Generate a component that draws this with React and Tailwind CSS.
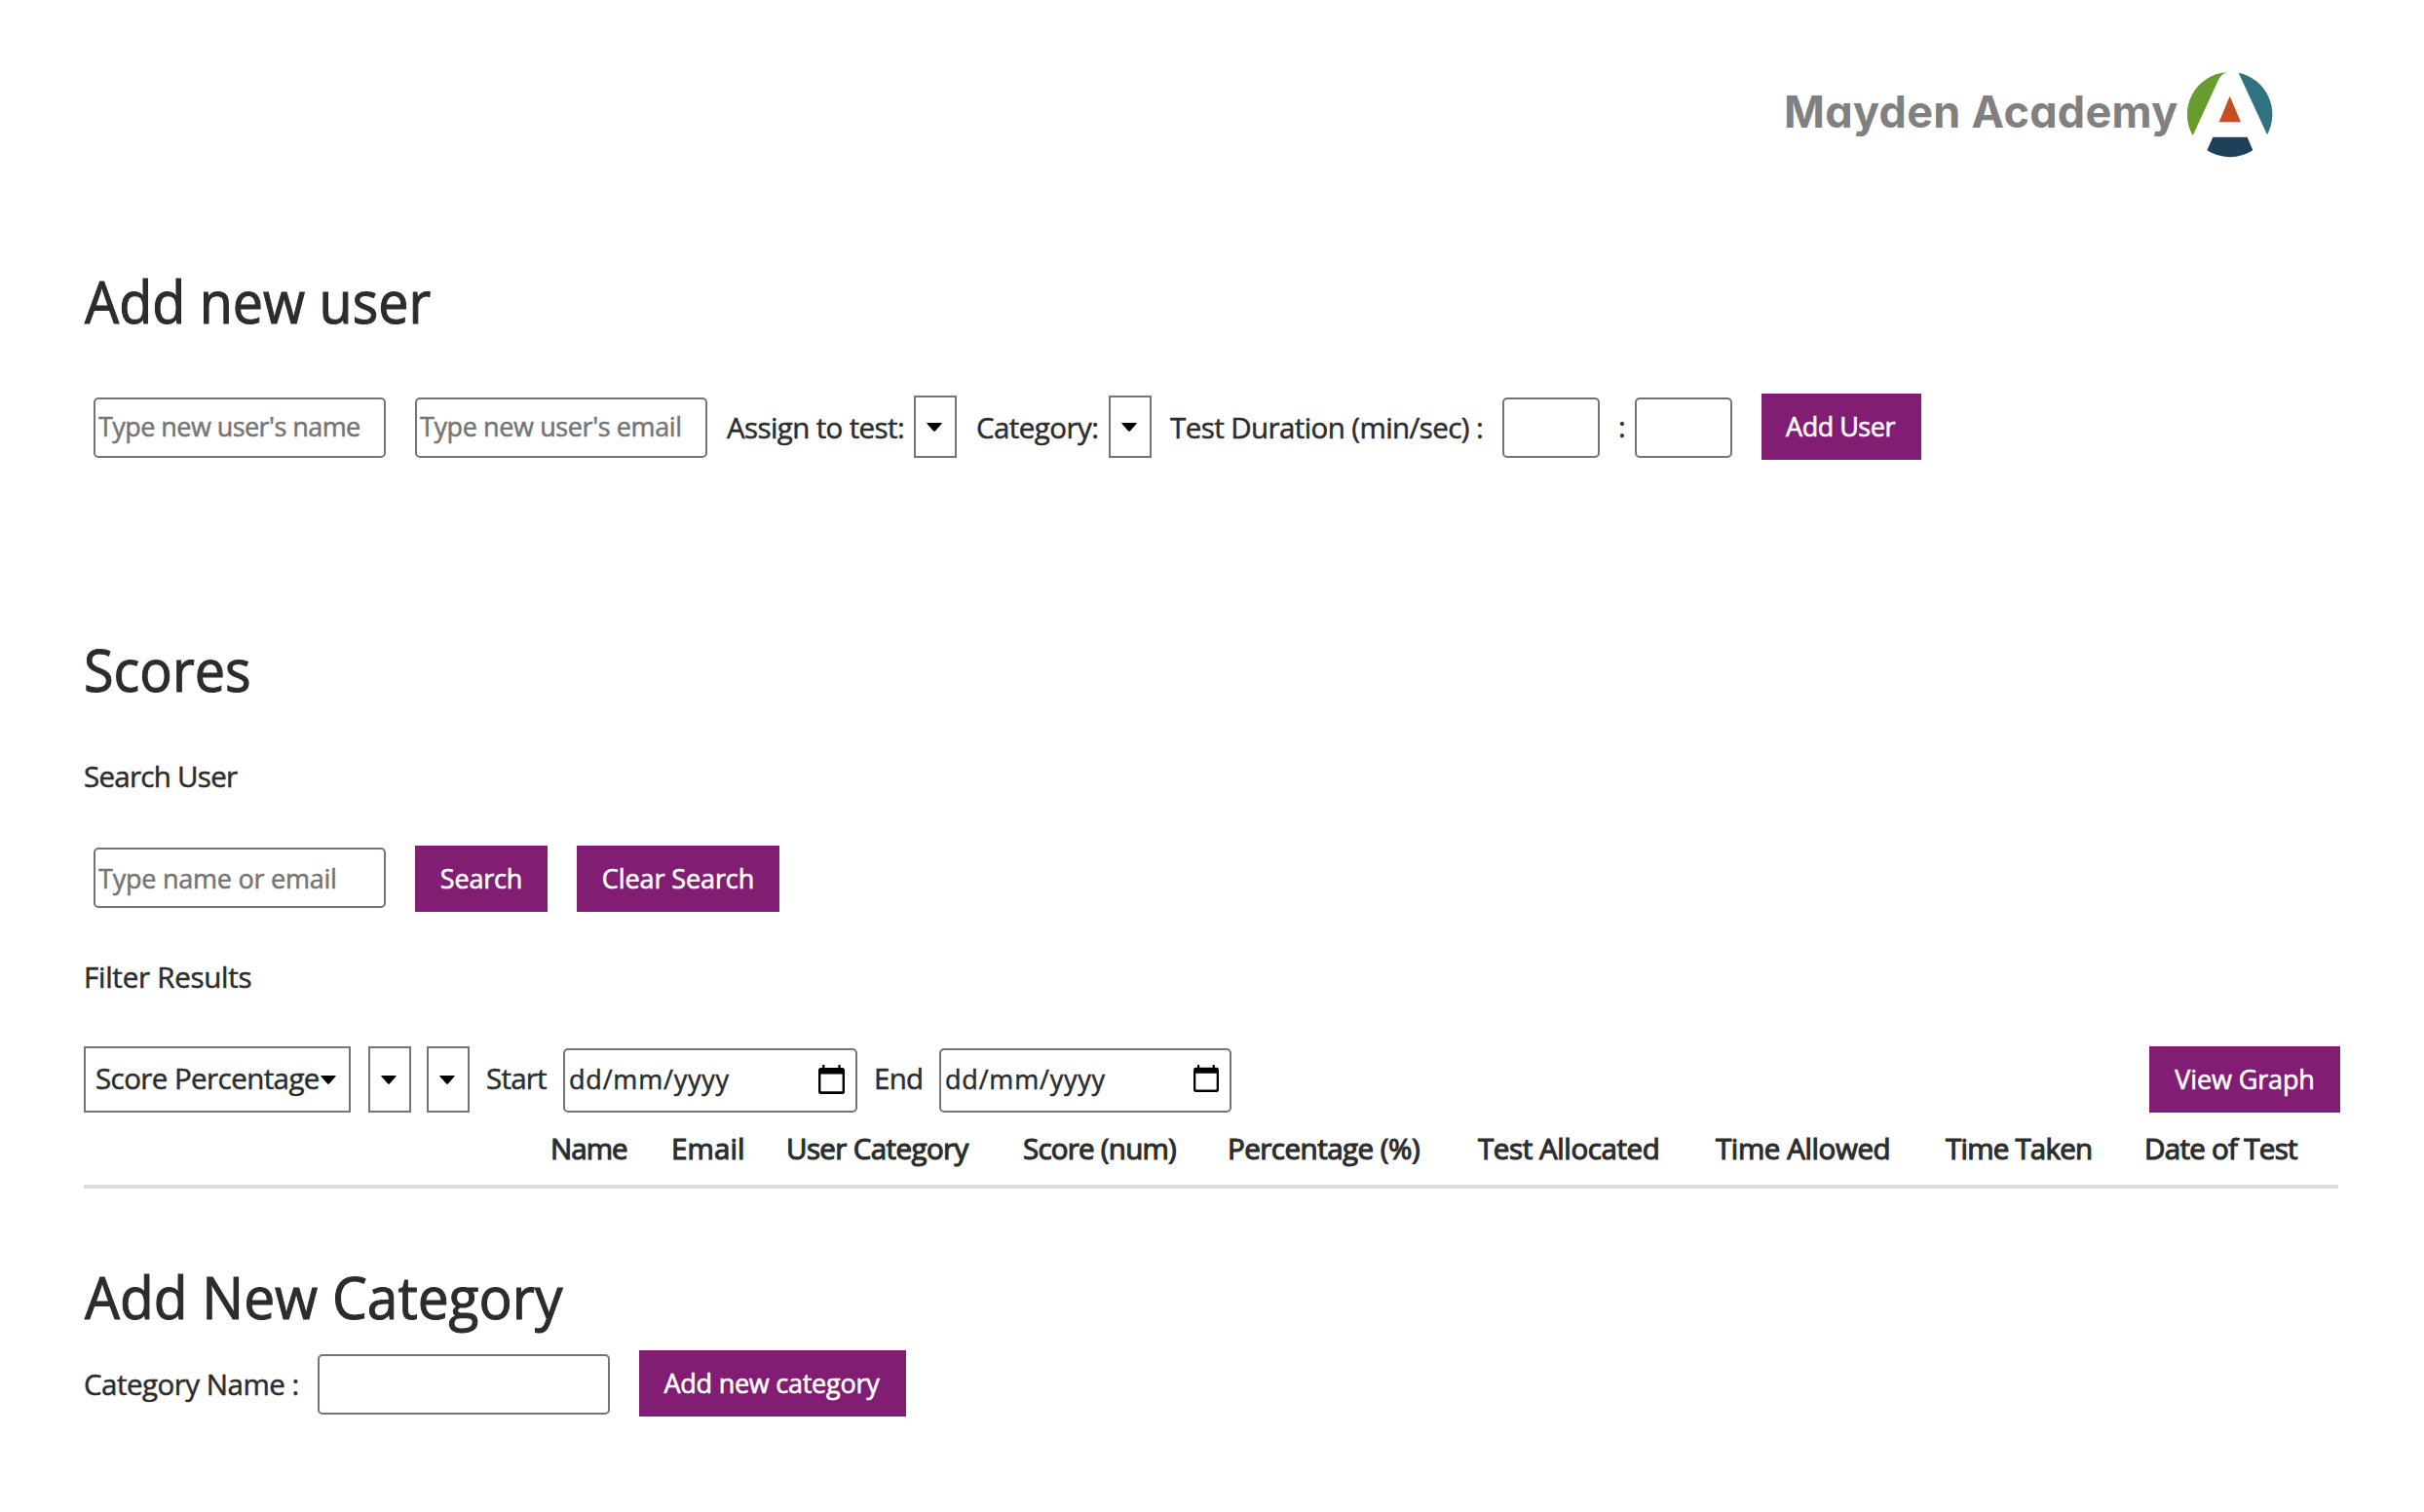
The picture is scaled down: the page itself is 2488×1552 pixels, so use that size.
function Logo() {
  return (
    <div className="flex h-[90px] items-start">
      <span className="mt-3 w-[414px] whitespace-nowrap text-[45px] leading-[60px] font-bold tracking-[0.3px] text-[#808080] [font-family:Inter,sans-serif] [font-feature-settings:'cv11','ss03']">
        Mayden Academy
      </span>
      <svg className="h-[89px] w-[88px] shrink-0" viewBox="74 40 264 267">
        <path d="M198 43.5 A130.5 130.5 0 0 0 91 239 L170 67 Q178 48 198 43.5 Z" fill="#679d30" />
        <path d="M232 45.5 A130.5 130.5 0 0 1 320 236 Z" fill="#317281" />
        <path d="M153 243 H259 L276 284 A130.5 130.5 0 0 1 135 284 Z" fill="#1e4058" />
        <path d="M205 117 L239 197 H172 Z" fill="#c74e22" />
      </svg>
    </div>
  );
}

function Caret() {
  return (
    <svg className="h-[9px] w-4 shrink-0" viewBox="0 0 16 9">
      <path d="M0.6 0 H15.4 Q16 0.6 15.3 1.3 L8.8 8.5 Q8 9.2 7.2 8.5 L0.7 1.3 Q0 0.6 0.6 0 Z" fill="#000" />
    </svg>
  );
}

function CalendarIcon({ className }) {
  return (
    <svg className={className} viewBox="0 0 27 30" preserveAspectRatio="none">
      <path
        fillRule="evenodd"
        fill="#000"
        d="M4.2 0 H6.4 V3 H20.4 V0 H22.6 V3 H24.5 Q27 3 27 5.5 V27.5 Q27 30 24.5 30 H2.5 Q0 30 0 27.5 V5.5 Q0 3 2.5 3 H4.2 Z M2.4 9.4 V27.3 H24.6 V9.4 Z"
      />
    </svg>
  );
}

function Heading({ className, children }) {
  return (
    <h2 className={`h-20 w-max origin-left whitespace-nowrap text-[60px] leading-[80px] font-normal [-webkit-text-stroke:1.1px_#2b2d2c] ${className}`}>
      {children}
    </h2>
  );
}

function Button({ className, children }) {
  return (
    <button className={`flex h-[68px] shrink-0 items-center justify-center whitespace-nowrap bg-[#811d72] text-[27px] text-white [-webkit-text-stroke:0.6px_white] ${className}`}>
      {children}
    </button>
  );
}

function TextInput({ className, placeholder }) {
  return (
    <input
      type="text"
      placeholder={placeholder}
      className={`h-[62px] shrink-0 rounded-[5px] border-2 border-[#757575] bg-white pb-[3px] pl-[3px] text-[27px] placeholder:text-[#757575] ${className}`}
    />
  );
}

function EmptySelect({ className }) {
  return (
    <div className={`flex w-11 shrink-0 items-center justify-center border-2 border-[#757575] pr-[2px] ${className}`}>
      <Caret />
    </div>
  );
}

function DateInput({ className, iconClassName }) {
  return (
    <div className={`mt-0.5 flex h-[66px] shrink-0 items-center justify-between rounded-[5px] border-2 border-[#757575] pl-1 pr-[11px] ${className}`}>
      <span className="pb-[3px] text-[27px] tracking-[0.8px]">dd/mm/yyyy</span>
      <CalendarIcon className={iconClassName} />
    </div>
  );
}

const columns = [
  ["Name", "tracking-[-0.97px]"],
  ["Email", "tracking-[0.1px]"],
  ["User Category", "tracking-[-0.6px]"],
  ["Score (num)", "tracking-[-0.75px]"],
  ["Percentage (%)", "tracking-[-0.5px]"],
  ["Test Allocated", "tracking-[-0.4px]"],
  ["Time Allowed", "tracking-[-0.4px]"],
  ["Time Taken", "tracking-[-0.77px]"],
  ["Date of Test", "tracking-[-0.7px]"],
];

export default function App() {
  return (
    <main className="h-[1552px] w-[2488px] overflow-hidden bg-white pl-[86px] text-[29.5px] leading-10 text-[#2b2d2c] [font-family:'Open_Sans',sans-serif]">
      <header className="flex h-[269px] justify-end pt-[73px] pr-[155px]">
        <Logo />
      </header>

      <section>
        <Heading className="ml-px scale-x-[0.927]">Add new user</Heading>
        <div className="mt-[55px] flex h-[68px] items-center whitespace-nowrap [-webkit-text-stroke-width:0.5px]">
          <TextInput className="mt-0.5 ml-[10px] w-[300px] tracking-[-0.56px]" placeholder="Type new user's name" />
          <TextInput className="mt-0.5 ml-[30px] w-[300px] tracking-[-0.4px]" placeholder="Type new user's email" />
          <span className="ml-5 w-48 pt-0.5 tracking-[-0.62px]">Assign to test:</span>
          <EmptySelect className="h-16" />
          <span className="ml-5 w-[136px] pt-0.5 tracking-[-0.55px]">Category:</span>
          <EmptySelect className="h-16" />
          <span className="ml-[19px] w-[341px] pt-0.5 tracking-[-0.58px]">Test Duration (min/sec) :</span>
          <TextInput className="mt-0.5 w-[100px]" />
          <span className="w-9 pl-[19px]">:</span>
          <TextInput className="mt-0.5 w-[100px]" />
          <Button className="ml-[30px] w-[164px] pr-0.5 tracking-[-0.5px]">Add User</Button>
        </div>
      </section>

      <section className="mt-[175px]">
        <Heading className="scale-x-[0.93]">Scores</Heading>
        <p className="mt-[50px] tracking-[-0.72px] [-webkit-text-stroke-width:0.5px]">Search User</p>
        <div className="mt-[51px] flex h-[68px] items-center [-webkit-text-stroke-width:0.5px]">
          <TextInput className="mb-0.5 ml-[10px] w-[300px] pb-0! tracking-[-0.24px]" placeholder="Type name or email" />
          <Button className="ml-[30px] w-[136px] tracking-[-0.18px]">Search</Button>
          <Button className="ml-[30px] w-[208px] tracking-[-0.1px]">Clear Search</Button>
        </div>
        <p className="mt-[47px] tracking-[-0.25px] [-webkit-text-stroke-width:0.5px]">Filter Results</p>
        <div className="mt-[51px] flex h-[68px] items-center whitespace-nowrap [-webkit-text-stroke-width:0.5px]">
          <div className="flex h-[68px] w-[274px] items-center justify-between border-2 border-[#757575] pl-[10px] pr-[13px]">
            <span className="w-[231px] shrink-0 pb-[3px] tracking-[-0.57px]">Score Percentage</span>
            <Caret />
          </div>
          <EmptySelect className="ml-[18px] h-[68px]" />
          <EmptySelect className="ml-4 h-[68px]" />
          <span className="ml-[17px] w-[79px] pb-[3px] tracking-[-0.78px]">Start</span>
          <DateInput className="w-[302px]" iconClassName="mb-0.5 h-[30px] w-[27px]" />
          <span className="ml-[17px] w-[67px] pb-[3px] tracking-[-0.75px]">End</span>
          <DateInput className="w-[300px]" iconClassName="mb-1 h-7 w-[26px]" />
          <Button className="mr-[86px] ml-auto w-[196px] tracking-[-0.13px]">View Graph</Button>
        </div>
        <div className="grid h-[78px] w-[2314px] grid-cols-[124px_118px_243px_210px_257px_244px_236px_204px_200px] items-center border-b-4 border-[#dcdcdc] pl-[479px] [-webkit-text-stroke:1.1px_#2b2d2c]">
          {columns.map(([label, tracking]) => (
            <span key={label} className={`whitespace-nowrap ${tracking}`}>{label}</span>
          ))}
        </div>
      </section>

      <section className="mt-[71px]">
        <Heading className="ml-px scale-x-[0.948]">Add New Category</Heading>
        <div className="mt-[15px] flex h-[68px] items-center whitespace-nowrap [-webkit-text-stroke-width:0.5px]">
          <span className="w-60 pt-0.5 tracking-[-0.5px]">Category Name :</span>
          <TextInput className="mt-0.5 w-[300px]" />
          <Button className="ml-[30px] w-[274px] pr-0.5 tracking-[-0.25px]">Add new category</Button>
        </div>
      </section>
    </main>
  );
}
